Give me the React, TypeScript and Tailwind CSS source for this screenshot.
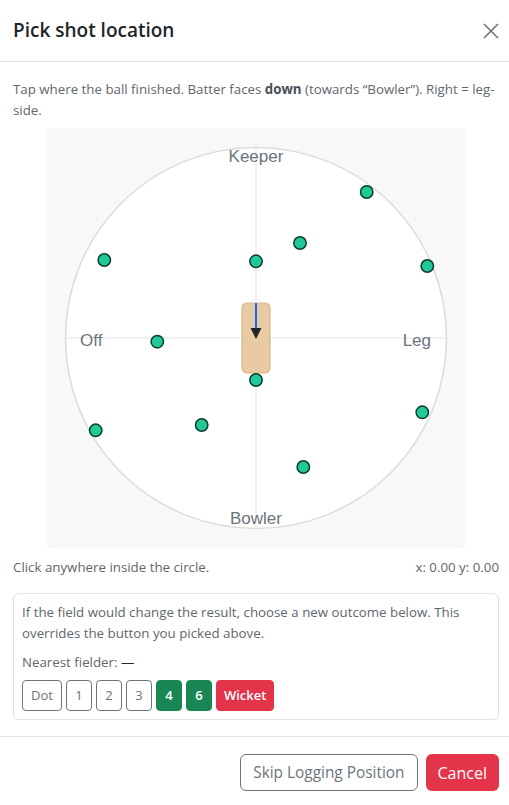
const fielders: [number, number][] = [
  [320.7, 64],
  [254, 115],
  [58.3, 132],
  [210, 133.3],
  [381.3, 138],
  [111.3, 213.7],
  [210, 252],
  [376.3, 284.3],
  [155.7, 297],
  [49.7, 302.3],
  [257.3, 339],
];

const outcomes = [
  { label: 'Dot', kind: 'outline' },
  { label: '1', kind: 'outline' },
  { label: '2', kind: 'outline' },
  { label: '3', kind: 'outline' },
  { label: '4', kind: 'green' },
  { label: '6', kind: 'green' },
  { label: 'Wicket', kind: 'red' },
];

function Field() {
  return (
    <div className="mx-auto w-[420px] h-[420px] rounded-md bg-[#f8f8f8]">
      <svg width="420" height="420" viewBox="0 0 420 420">
        <circle cx="210" cy="210" r="190.5" fill="#ffffff" stroke="#dcdcdc" strokeWidth="1.5" />
        <line x1="210" y1="20" x2="210" y2="400" stroke="#ececec" strokeWidth="1.5" />
        <line x1="20" y1="210" x2="400" y2="210" stroke="#ececec" strokeWidth="1.5" />
        <g fill="#6c757d" fontFamily="'Liberation Sans', Arial, sans-serif" fontSize="17">
          <text x="210" y="34" textAnchor="middle">Keeper</text>
          <text x="210" y="396" textAnchor="middle">Bowler</text>
          <text x="34" y="218">Off</text>
          <text x="385" y="218" textAnchor="end">Leg</text>
        </g>
        <rect x="196" y="175" width="28" height="70" rx="5" fill="#e8cba3" stroke="#d6b88a" strokeWidth="1.2" />
        <line x1="210" y1="175" x2="210" y2="201" stroke="#0d6efd" strokeWidth="2" />
        <polygon points="204.5,200 215.5,200 210,211" fill="#212529" />
        {fielders.map(([x, y], i) => (
          <circle key={i} cx={x} cy={y} r="6.2" fill="#20c997" stroke="#0b3d2c" strokeWidth="1.5" />
        ))}
      </svg>
    </div>
  );
}

export default function App() {
  return (
    <div className="min-h-screen bg-white text-[#212529] font-['Open_Sans','Noto_Sans',sans-serif]">
      {/* Header */}
      <div className="h-[62px] flex items-center justify-between pl-[13px] pr-[10px] border-b border-[#dee2e6]">
        <h5 className="text-[19px] font-semibold leading-none text-[#212529]">Pick shot location</h5>
        <button className="text-[#6c757d]">
          <svg width="16" height="16" viewBox="0 0 16 16" fill="none" stroke="currentColor" strokeWidth="1.6">
            <path d="M1 1L15 15M15 1L1 15" />
          </svg>
        </button>
      </div>

      {/* Body */}
      <div className="pl-[13px] pr-[10px] pt-[17px] pb-4">
        <p className="text-[13.3px] leading-[21px] text-[#5f666d] mb-[7px]">
          Tap where the ball finished. Batter faces <b className="font-bold text-[#495057]">down</b> (towards “Bowler”). Right = leg-side.
        </p>

        <Field />

        <div className="mt-[9px] flex justify-between text-[13.3px] leading-5 text-[#5f666d]">
          <span>Click anywhere inside the circle.</span>
          <span>x: 0.00 y: 0.00</span>
        </div>

        <div className="mt-4 border border-[#dee2e6] rounded-md p-2 text-[13.3px] leading-[21px] text-[#5f666d]">
          <p>If the field would change the result, choose a new outcome below. This overrides the button you picked above.</p>
          <p className="mt-2">Nearest fielder: <span className="text-[#212529]">—</span></p>
          <div className="mt-[7px] flex gap-[4px]">
            {outcomes.map((o) => (
              <button
                key={o.label}
                className={
                  o.kind === 'outline'
                    ? 'h-[31px] px-[8px] min-w-[26px] rounded border border-[#6c757d] text-[#6c757d] text-[13px]'
                    : o.kind === 'green'
                    ? 'h-[31px] px-[8px] min-w-[26px] rounded bg-[#198754] border border-[#198754] text-white font-semibold text-[13px]'
                    : 'h-[31px] px-[7px] rounded bg-[#e4344a] border border-[#e4344a] text-white font-semibold text-[13px]'
                }
              >
                {o.label}
              </button>
            ))}
          </div>
        </div>
      </div>

      {/* Footer */}
      <div className="border-t border-[#dee2e6] flex justify-end gap-2 pt-[17px] pr-[10px]">
        <button className="h-[37px] px-3 rounded-md border border-[#6c757d] text-[#6c757d] text-[15.4px]">
          Skip Logging Position
        </button>
        <button className="h-[37px] px-3 rounded-md bg-[#e4344a] text-white text-[16px]">Cancel</button>
      </div>
    </div>
  );
}
